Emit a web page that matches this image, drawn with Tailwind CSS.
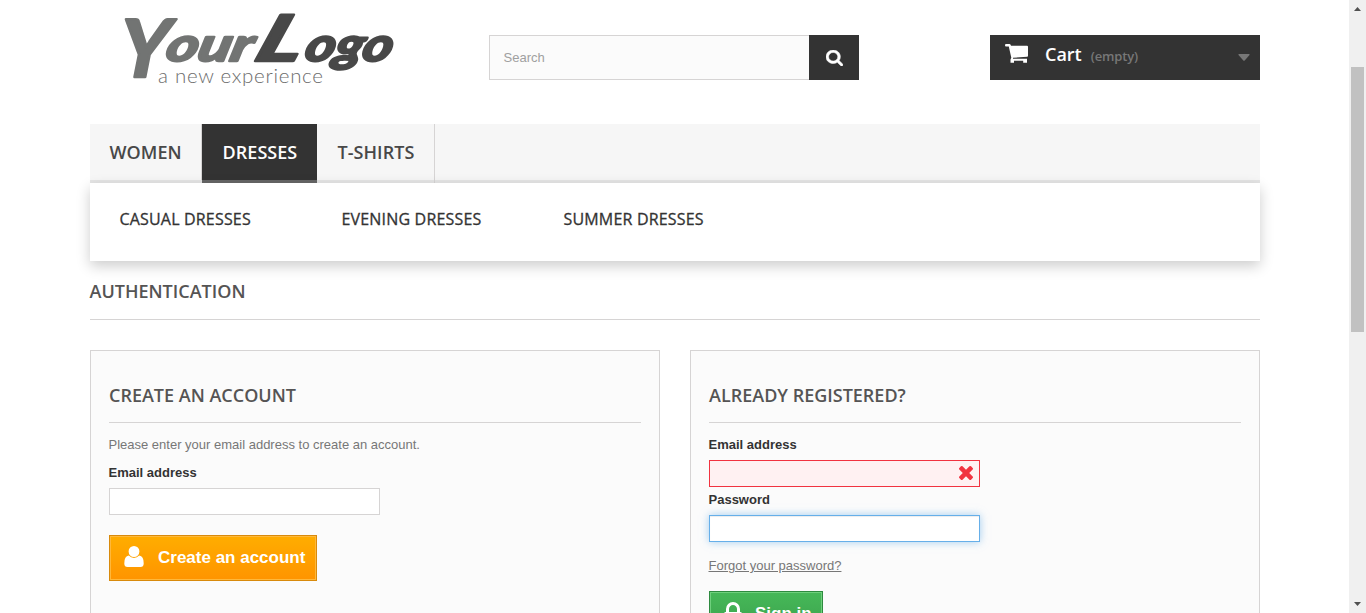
<!DOCTYPE html>
<html lang="en">
<head>
<meta charset="utf-8">
<title>Login - My Store</title>
<script src="https://cdn.jsdelivr.net/npm/@tailwindcss/browser@4"></script>
</head>
<body class="flex h-[613px] overflow-hidden bg-white font-['Liberation_Sans',sans-serif] text-[13px] leading-[18px] text-[#777777]">
<div class="h-full w-[1349px] overflow-hidden pl-[90px]">
 <div class="w-[1170px]">
  <header class="flex h-[124px] items-start">
   <svg class="mt-[5px] ml-[20px] h-[90px] w-[300px] shrink-0 overflow-visible" viewBox="110 5 300 90" role="img" aria-label="Your Logo, a new experience">
    <g class="font-['Lato',sans-serif] font-bold italic" stroke-linejoin="round" stroke-width="2.500">
     <g fill="#727473" stroke="#727473">
      <text font-size="80" textLength="50" lengthAdjust="spacingAndGlyphs" transform="translate(118 77) skewX(-4)">Y</text>
      <text font-size="47" textLength="86" lengthAdjust="spacingAndGlyphs" transform="translate(164 61) skewX(-14)">our</text>
     </g>
     <g fill="#484848" stroke="#484848">
      <text font-size="64" textLength="46" lengthAdjust="spacingAndGlyphs" transform="translate(252 61) skewX(-20)">L</text>
      <text font-size="47" textLength="87" lengthAdjust="spacingAndGlyphs" transform="translate(303 61) skewX(-14)">ogo</text>
     </g>
    </g>
    <text class="font-['Lato',sans-serif] font-light" x="158" y="83" font-size="20.500" fill="#6c6c6c" textLength="165" lengthAdjust="spacing">a new experience</text>
   </svg>
   <form class="mt-[35px] ml-[79px] flex h-[45px] w-[370px] shrink-0">
    <div class="flex w-[320px] items-center border border-r-0 border-[#d6d4d4] bg-[#fbfbfb] pl-[13.500px] text-[#a0a0a0]">Search</div>
    <button type="button" aria-label="Search" class="flex w-[50px] items-center justify-center bg-[#333333] text-white">
     <svg class="mt-px h-[16px] w-[17px]" preserveAspectRatio="none" viewBox="64 128 1664 1664" fill="currentColor" stroke="currentColor" stroke-width="50"><path d="M1216 832q0-185-131.500-316.500t-316.500-131.500-316.500 131.500-131.500 316.500 131.500 316.500 316.500 131.500 316.500-131.500 131.500-316.500zm512 832q0 52-38 90t-90 38q-54 0-90-38l-343-342q-179 124-399 124-143 0-273.500-55.500t-225-150-150-225-55.500-273.500 55.500-273.500 150-225 225-150 273.500-55.500 273.500 55.500 225 150 150 225 55.500 273.500q0 220-124 399l343 343q37 37 37 90z"/></svg>
    </button>
   </form>
   <div class="mt-[35px] ml-auto flex h-[45px] w-[270px] items-center bg-[#333333] pl-[15px] pr-[10px]">
    <svg class="mb-[8px] h-[19px] w-[23px] text-white" viewBox="0 0 23 19" fill="currentColor"><path d="M1 0h3.500q.9 0 1.200 1l.3.700H22q1 0 1 1v9q0 .9-.9 1L8 13.800v1h14v4h-3.800v-2H9v2H5.500v-3.300l.8-1.700L3.800 2.500H1Q0 2.500 0 1.300 0 0 1 0z"/></svg>
    <span class="mb-[7px] ml-[17px] font-['Open_Sans',sans-serif] text-[18px] leading-[22px] font-semibold text-white">Cart</span>
    <span class="mb-[3px] ml-[9px] font-['Open_Sans',sans-serif] text-[13px] font-semibold tracking-[-0.15px] text-[#777777]">(empty)</span>
    <svg class="ml-auto h-[7px] w-[12px] text-[#777777]" viewBox="0 0 12 7" fill="currentColor"><path d="M1 0h10q1 0 .5 1L6.700 6.500q-.7.7-1.400 0L.5 1Q0 0 1 0z"/></svg>
   </div>
  </header>

  <nav class="font-['Open_Sans',sans-serif]">
   <ul class="flex h-[59px] border-b-[3px] border-[#e5e5e5] bg-[#f6f6f6] text-[18px] leading-[22px] font-semibold tracking-[0.05px] text-[#484848]">
    <li class="w-[112px] border-r border-[#d6d4d4] pt-[17px] pl-[19.500px]">WOMEN</li>
    <li class="-mb-[3px] w-[115px] border-b-[3px] border-[#666666] bg-[#333333] pt-[17px] pl-[20.500px] text-white">DRESSES</li>
    <li class="w-[118px] border-r border-[#d6d4d4] -mb-[3px] pt-[17px] pl-[20.500px]">T-SHIRTS</li>
   </ul>
   <ul class="relative flex h-[78px] bg-white pt-[26px] pl-[29.500px] text-[16px] leading-[20px] tracking-[0.18px] text-[#333333] [-webkit-text-stroke:0.3px_#333333] shadow-[0_5px_13px_rgba(0,0,0,0.2)]">
    <li class="w-[222px]">CASUAL DRESSES</li>
    <li class="w-[222px]">EVENING DRESSES</li>
    <li class="w-[222px]">SUMMER DRESSES</li>
   </ul>
  </nav>

  <h1 class="-indent-[0.5px] h-[59px] border-b border-[#d6d4d4] pt-[19px] font-['Open_Sans',sans-serif] text-[18px] leading-[22px] font-semibold text-[#555454]">AUTHENTICATION</h1>

  <main class="mt-[30px] grid grid-cols-2 gap-[30px]">
   <section class="h-[320px] border border-[#d6d4d4] bg-[#fbfbfb] px-[18px] pt-[33px]">
    <h3 class="h-[39px] border-b border-[#d6d4d4] font-['Open_Sans',sans-serif] text-[18px] leading-[23px] font-semibold text-[#555454]">CREATE AN ACCOUNT</h3>
    <p class="-ml-[0.5px] mt-[13px]">Please enter your email address to create an account.</p>
    <label class="-ml-[0.5px] mt-[10px] block font-bold text-[#333333]">Email address</label>
    <div class="mt-[6px] h-[27px] w-[271px] border border-[#d6d4d4] bg-white"></div>
    <button type="button" class="mt-[20px] flex h-[46px] w-[208px] items-center border border-[#d88a0c] bg-linear-to-b from-[#ffad00] to-[#ff9400] pl-[14px] text-[17px] font-bold text-white shadow-[inset_0_0_0_1px_#ffb83b]">
     <svg class="mb-[3px] h-[21px] w-[20px]" viewBox="0 0 20 21" fill="currentColor"><path d="M10 0a5.400 5.400 0 0 1 5.400 5.500A5.400 5.400 0 0 1 10 11a5.400 5.400 0 0 1-5.400-5.500A5.400 5.400 0 0 1 10 0zM4.800 9.600Q7 12 10 12t5.200-2.400Q19.700 10 19.700 17.500q0 3.500-3.300 3.500H3.600Q.3 21 .3 17.500.3 10 4.800 9.600z"/></svg>
     <span class="ml-[14px] whitespace-nowrap">Create an account</span>
    </button>
   </section>
   <section class="h-[320px] border border-[#d6d4d4] bg-[#fbfbfb] px-[18px] pt-[33px]">
    <h3 class="h-[39px] border-b border-[#d6d4d4] font-['Open_Sans',sans-serif] text-[18px] leading-[23px] font-semibold text-[#555454]">ALREADY REGISTERED?</h3>
    <label class="-ml-[0.5px] mt-[13px] block font-bold text-[#333333]">Email address</label>
    <div class="mt-[6px] flex h-[27px] w-[271px] items-center justify-end border border-[#f13340] bg-[#fff1f2] pr-[6px] text-[#f13340]">
     <svg class="mb-px h-[14px] w-[14px]" viewBox="302 366 1188 1188" fill="currentColor"><path d="M1490 1322q0 40-28 68l-136 136q-28 28-68 28t-68-28l-294-294-294 294q-28 28-68 28t-68-28l-136-136q-28-28-28-68t28-68l294-294-294-294q-28-28-28-68t28-68l136-136q28-28 68-28t68 28l294 294 294-294q28-28 68-28t68 28l136 136q28 28 28 68t-28 68l-294 294 294 294q28 28 28 68z"/></svg>
    </div>
    <label class="-ml-[0.5px] mt-[4px] block font-bold text-[#333333]">Password</label>
    <div class="mt-[6px] h-[27px] w-[271px] border border-[#66afe9] bg-white shadow-[inset_0_1px_1px_rgba(0,0,0,0.075),0_0_8px_rgba(102,175,233,0.6)]"></div>
    <p class="-ml-[0.5px] mt-[15px]"><a class="underline">Forgot your password?</a></p>
    <button type="button" class="mt-[16px] flex h-[46px] w-[114px] items-center border border-[#2e8a3f] bg-linear-to-b from-[#46b858] to-[#3aa04c] pl-[14px] text-[17px] font-bold text-white shadow-[inset_0_0_0_1px_#6fd07d]">
     <svg class="mb-[3px] h-[22px] w-[18px]" preserveAspectRatio="none" viewBox="320 128 1152 1408" fill="currentColor"><path d="M640 768h512v-192q0-106-75-181t-181-75-181 75-75 181v192zm832 96v576q0 40-28 68t-68 28h-960q-40 0-68-28t-28-68v-576q0-40 28-68t68-28h32v-192q0-184 132-316t316-132 316 132 132 316v192h32q40 0 68 28t28 68z"/></svg>
     <span class="ml-[13px] whitespace-nowrap">Sign in</span>
    </button>
   </section>
  </main>
 </div>
</div>
<aside class="flex h-full w-[17px] flex-col items-center bg-[#f0f0f0]" aria-hidden="true">
 <svg class="mt-[7px] h-[4px] w-[7px]" viewBox="0 0 7 4" fill="#505050"><path d="M0 4 3.500 0 7 4z"/></svg>
 <div class="mt-[56px] h-[265px] w-[13px] bg-[#c1c1c1]"></div>
 <svg class="mt-auto mb-[7px] h-[4px] w-[7px]" viewBox="0 0 7 4" fill="#505050"><path d="M0 0 3.500 4 7 0z"/></svg>
</aside>
</body>
</html>
